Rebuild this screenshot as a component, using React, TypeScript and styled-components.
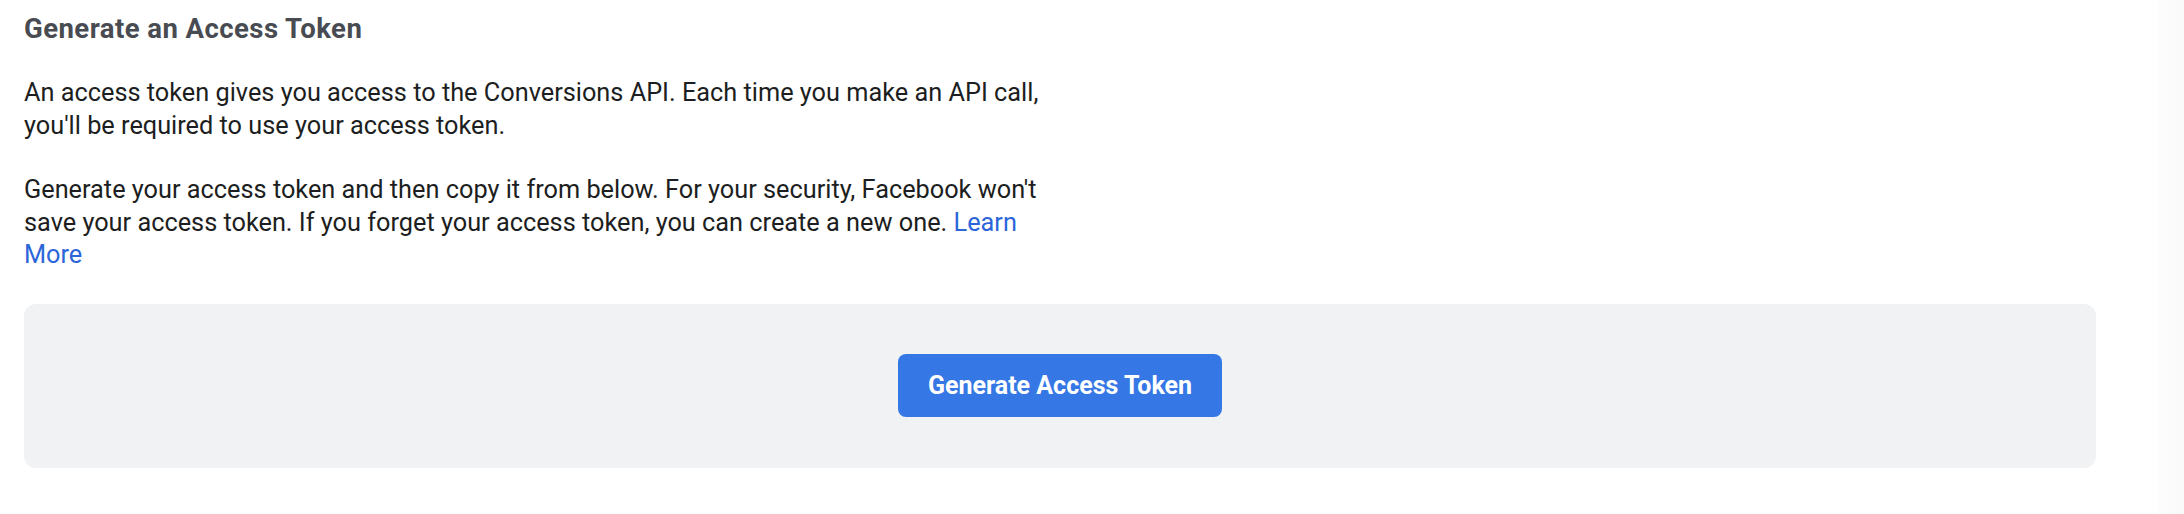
import styled, { createGlobalStyle } from "styled-components";

const GlobalStyle = createGlobalStyle`
    html, body {
        margin: 0;
        padding: 0;
        background: #ffffff;
    }
    body {
        font-family: Roboto, "Liberation Sans", Arial, sans-serif;
        -webkit-font-smoothing: antialiased;
    }
`;

const Page = styled.div`
    min-height: 514px;
    box-sizing: border-box;
    padding: 14px 88px 0 24px;
    background: linear-gradient(to right, #ffffff calc(100% - 28px), #fcfcfc calc(100% - 24px), #f9f9f9 100%);
`;

const Title = styled.h2`
    margin: 0 0 33px;
    font-size: 27.5px;
    line-height: 30px;
    letter-spacing: 0.45px;
    font-weight: 700;
    color: #484c52;
`;

const Text = styled.p`
    margin: 0 0 31.6px;
    max-width: 1035px;
    font-size: 25.3px;
    line-height: 32.7px;
    color: #1c1e21;
`;

const Link = styled.a`
    color: #2b65d9;
    text-decoration: none;
`;

const Panel = styled.div`
    height: 164px;
    border-radius: 12px;
    background-color: #f1f2f4;
    display: flex;
    align-items: center;
    justify-content: center;
`;

const Button = styled.button`
    height: 63px;
    width: 324px;
    padding: 0;
    border: none;
    border-radius: 8px;
    background-color: #3578e5;
    color: #ffffff;
    font-family: inherit;
    font-size: 25px;
    font-weight: 700;
    cursor: pointer;
`;

export default function App() {
    return (
        <Page>
            <GlobalStyle />
            <Title>Generate an Access Token</Title>
            <Text>
                An access token gives you access to the Conversions API. Each time you make an API call,
                you'll be required to use your access token.
            </Text>
            <Text>
                Generate your access token and then copy it from below. For your security, Facebook won't
                save your access token. If you forget your access token, you can create a new one.{" "}
                <Link href="#">Learn More</Link>
            </Text>
            <Panel>
                <Button>Generate Access Token</Button>
            </Panel>
        </Page>
    );
}
